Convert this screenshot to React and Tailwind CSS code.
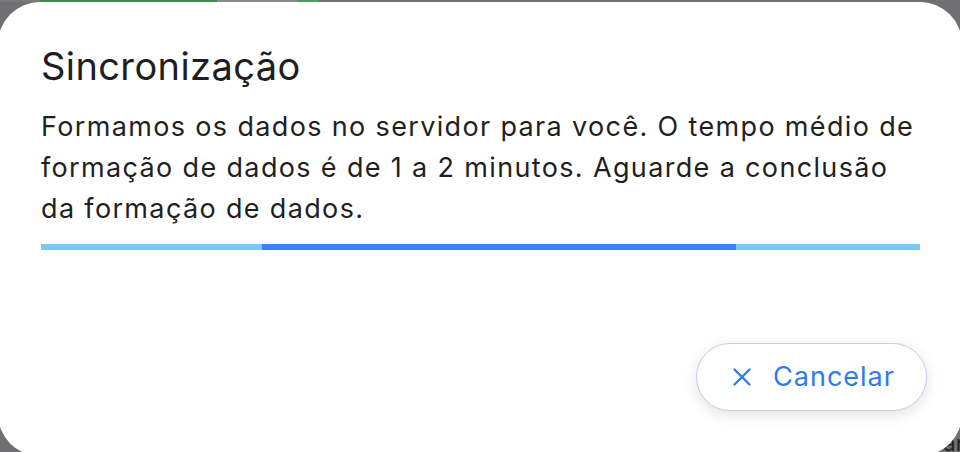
import React from 'react'

function CloseIcon() {
	return (
		<svg width="20" height="20" viewBox="0 0 20 20" fill="none" stroke="currentColor" strokeWidth="2.4" strokeLinecap="round">
			<path d="M2.5 2.5 L17.5 17.5 M17.5 2.5 L2.5 17.5" />
		</svg>
	)
}

export default function App() {
	return (
		<div
			className="relative h-[452px] w-[960px] overflow-hidden bg-[#707073]"
			style={{ fontFamily: 'Inter, "Noto Sans", sans-serif' }}
		>
			{/* page behind the dialog */}
			<div className="flex h-[2px]">
				<div className="w-[40px] bg-[#7a7a7c]" />
				<div className="w-[177px] bg-[#3e8a4e]" />
				<div className="w-[80px] bg-[#8a8a8c]" />
				<div className="w-[22px] bg-[#4f9a5e]" />
			</div>
			<span className="absolute bottom-[-8px] right-[-4px] text-[22px] text-[#222]">ar</span>

			<div className="relative mx-[-2px] h-[454px] rounded-[42px] bg-white px-[43px] pt-[41px]">
				<h1 className="text-[38px] leading-[46px] font-normal tracking-[0.4px] text-[#1d1d22]">Sincronização</h1>
				<p className="mt-[17px] text-[27px] leading-[41px] tracking-[1.35px] text-[#1f1f23]">
					Formamos os dados no servidor para você. O tempo médio de formação de dados é de 1 a 2 minutos. Aguarde a conclusão da formação de dados.
				</p>
				<div className="mt-[15px] flex h-[6px] w-[879px] bg-[#76caf3]">
					<div className="w-[221px]" />
					<div className="w-[474px] bg-[#3a7ff4]" />
				</div>
				<div className="mt-[93px] mr-[-8px] flex justify-end">
					<button className="flex h-[68px] w-[231px] items-center justify-center gap-[21px] rounded-full border border-[#c9cbe8] bg-white pl-[4px] text-[27px] text-[#2f7bec] shadow-[0_4px_14px_rgba(0,0,0,0.12)]">
						<CloseIcon />
						<span className="tracking-[1px]">Cancelar</span>
					</button>
				</div>
			</div>
		</div>
	)
}
